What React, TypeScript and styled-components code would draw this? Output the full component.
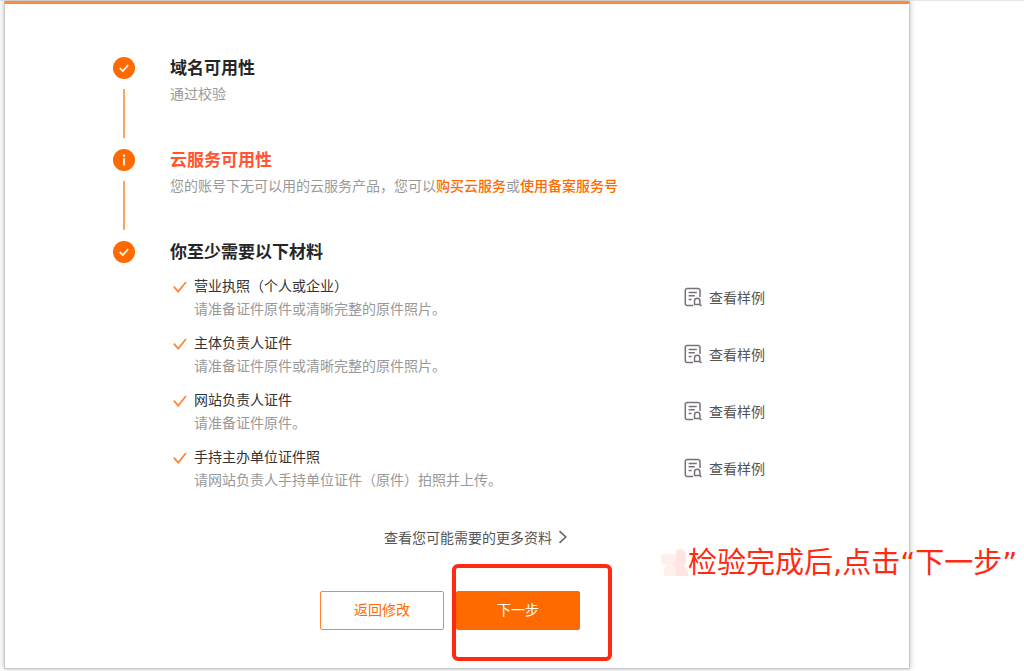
import React from "react";
import styled, { createGlobalStyle } from "styled-components";

const ORANGE = "#ff6a00";
const RED = "#ff2a12";

const GlobalStyle = createGlobalStyle`
  *, *::before, *::after { box-sizing: border-box; }
  body {
    margin: 0;
    background: #fff;
    font-family: "Noto Sans CJK SC", sans-serif;
    font-size: 14px;
    color: #333;
    overflow-x: hidden;
  }
  h2, h3, p, ul, ol { margin: 0; padding: 0; }
  ul, ol { list-style: none; }
`;

const Page = styled.div`
  padding: 0 114px 2px 4px;
  border-top: 1px solid #e6e6e6;
`;

const Card = styled.main`
  padding: 50px 107px 38px 108px;
  background: #fff;
  border: 1px solid #c8c8c8;
  border-top: 3px solid #ff8a3c;
  box-shadow: 0 0 6px rgba(0, 0, 0, 0.25);
`;

const StepRow = styled.li`
  display: grid;
  grid-template-columns: 22px minmax(0, 1fr);
  column-gap: 35px;
`;

const Rail = styled.div`
  display: flex;
  flex-direction: column;
  align-items: center;
  gap: 10px;
  padding-top: 3px;
`;

const Connector = styled.span`
  width: 2px;
  height: 49px;
  background: #ffa564;
`;

const StepBody = styled.div<{ $last?: boolean }>`
  padding-bottom: ${(p) => (p.$last ? 0 : 40)}px;
`;

const StepTitle = styled.h2<{ $alert?: boolean }>`
  font-size: 17px;
  line-height: 26px;
  font-weight: 700;
  color: ${(p) => (p.$alert ? "#ff5533" : "#262626")};
`;

const StepNote = styled.p`
  line-height: 26px;
  color: #999;
`;

const TextLink = styled.a`
  color: ${ORANGE};
  font-weight: 500;
  text-decoration: none;
`;

const Materials = styled.ul`
  display: grid;
  row-gap: 11px;
  margin-top: 10px;
`;

const Material = styled.li`
  display: grid;
  grid-template-columns: 14px minmax(0, 1fr) 118px;
  align-items: center;
  column-gap: 7px;
  padding-left: 3px;
`;

const TickCell = styled.span`
  align-self: start;
  display: flex;
  align-items: center;
  height: 26px;
`;

const MaterialTitle = styled.h3`
  font-size: 14px;
  line-height: 22px;
  font-weight: 400;
  color: #333;
`;

const MaterialNote = styled.p`
  line-height: 24px;
  color: #999;
`;

const SampleLink = styled.a`
  display: flex;
  align-items: center;
  gap: 7px;
  color: #555;
  text-decoration: none;
`;

const MoreLink = styled.a`
  display: flex;
  align-items: center;
  justify-content: center;
  gap: 6px;
  margin-top: 34px;
  padding-left: 37px;
  line-height: 24px;
  color: #555;
  text-decoration: none;
`;

const Actions = styled.div`
  display: flex;
  justify-content: center;
  gap: 12px;
  margin-top: 42px;
  padding-right: 15px;
`;

const Button = styled.button<{ $primary?: boolean }>`
  width: 124px;
  height: 39px;
  padding: 0 0 3px;
  border: 1px solid ${(p) => (p.$primary ? ORANGE : "#ff8534")};
  border-radius: 2px;
  background: ${(p) => (p.$primary ? ORANGE : "#fff")};
  color: ${(p) => (p.$primary ? "#fff" : ORANGE)};
  font: inherit;
  cursor: pointer;
`;

const Highlighted = styled.div`
  position: relative;
`;

const HighlightBox = styled.span`
  position: absolute;
  inset: -27px -32px -31px -4px;
  border: 4px solid ${RED};
  border-radius: 6px;
  pointer-events: none;
`;

const Callout = styled.span`
  position: absolute;
  left: calc(100% + 81px);
  top: -50px;
  display: flex;
  align-items: center;
  white-space: nowrap;
  font-family: "DejaVu Sans", "Noto Sans CJK SC", sans-serif;
  font-size: 29px;
  line-height: 44px;
  color: ${RED};
`;

const CheckBadge = () => (
  <svg width="22" height="22" viewBox="0 0 22 22" aria-hidden="true">
    <circle cx="11" cy="11" r="11" fill={ORANGE} />
    <path d="M6.8 11l3 3.2 5.4-6.2" fill="none" stroke="#fff" strokeOpacity="0.9" strokeWidth="1.8" />
  </svg>
);

const InfoBadge = () => (
  <svg width="22" height="22" viewBox="0 0 22 22" aria-hidden="true">
    <circle cx="11" cy="11" r="11" fill={ORANGE} />
    <path d="M11 5.6v2.2M11 9.2v7.3" fill="none" stroke="#fff" strokeOpacity="0.85" strokeWidth="2.2" />
  </svg>
);

const Tick = () => (
  <svg width="14" height="12" viewBox="0 0 14 12" aria-hidden="true">
    <path d="M.8 5.6l4.4 5L13 1" fill="none" stroke="#ff8433" strokeWidth="1.7" />
  </svg>
);

const SampleIcon = () => (
  <svg width="18" height="20" viewBox="0 0 18 20" fill="none" stroke="#77707c" strokeWidth="1.5" aria-hidden="true">
    <path d="M9 18.6H3.2A1.9 1.9 0 0 1 1.3 16.7V3.3A1.9 1.9 0 0 1 3.2 1.4h10.9A1.9 1.9 0 0 1 16 3.3V10" />
    <path d="M4.6 5.4h8.2M4.6 8.7h6.2M4.6 12.4h3" />
    <path d="M10.5 17.4V14a2.7 2.7 0 0 1 5.4 0v3.4zM15 16.6l2.4 2.4" />
  </svg>
);

const Chevron = () => (
  <svg width="10" height="14" viewBox="0 0 10 14" aria-hidden="true">
    <path d="M1.5 1.2L7.8 7l-6.3 5.8" fill="none" stroke="#666" strokeWidth="1.6" />
  </svg>
);

const Smudge = () => (
  <svg width="27" height="28" viewBox="0 0 27 28" aria-hidden="true">
    <path d="M3 5h12V3q0-3 4-3 6 0 6 6v6q0 4-3 5 5 1 5 6v4H3v-6q0-4 4-5H3q-3 0-3-4V8q0-3 3-3z" fill="#fff0ed" />
    <path d="M15 2q1-2 4-2 6 0 6 6v6q0 4-3 5 5 1 5 6v4H15V17q-3-1-3-3t3-2z" fill="#fee5e1" />
  </svg>
);

const materials = [
  { title: "营业执照（个人或企业）", note: "请准备证件原件或清晰完整的原件照片。" },
  { title: "主体负责人证件", note: "请准备证件原件或清晰完整的原件照片。" },
  { title: "网站负责人证件", note: "请准备证件原件。" },
  { title: "手持主办单位证件照", note: "请网站负责人手持单位证件（原件）拍照并上传。" },
];

interface StepProps {
  badge: React.ReactNode;
  title: string;
  alert?: boolean;
  last?: boolean;
  children: React.ReactNode;
}

const Step = ({ badge, title, alert, last, children }: StepProps) => (
  <StepRow>
    <Rail>
      {badge}
      {!last && <Connector />}
    </Rail>
    <StepBody $last={last}>
      <StepTitle $alert={alert}>{title}</StepTitle>
      {children}
    </StepBody>
  </StepRow>
);

export default function App() {
  return (
    <>
      <GlobalStyle />
      <Page>
        <Card>
          <ol>
            <Step badge={<CheckBadge />} title="域名可用性">
              <StepNote>通过校验</StepNote>
            </Step>
            <Step badge={<InfoBadge />} title="云服务可用性" alert>
              <StepNote>
                您的账号下无可以用的云服务产品，您可以<TextLink href="#buy">购买云服务</TextLink>或
                <TextLink href="#code">使用备案服务号</TextLink>
              </StepNote>
            </Step>
            <Step badge={<CheckBadge />} title="你至少需要以下材料" last>
              <Materials>
                {materials.map((m) => (
                  <Material key={m.title}>
                    <TickCell>
                      <Tick />
                    </TickCell>
                    <div>
                      <MaterialTitle>{m.title}</MaterialTitle>
                      <MaterialNote>{m.note}</MaterialNote>
                    </div>
                    <SampleLink href="#sample">
                      <SampleIcon />
                      查看样例
                    </SampleLink>
                  </Material>
                ))}
              </Materials>
            </Step>
          </ol>
          <MoreLink href="#more">
            查看您可能需要的更多资料
            <Chevron />
          </MoreLink>
          <Actions>
            <Button type="button">返回修改</Button>
            <Highlighted>
              <Button type="button" $primary>
                下一步
              </Button>
              <HighlightBox />
              <Callout>
                <Smudge />
                检验完成后,点击“下一步”
              </Callout>
            </Highlighted>
          </Actions>
        </Card>
      </Page>
    </>
  );
}
